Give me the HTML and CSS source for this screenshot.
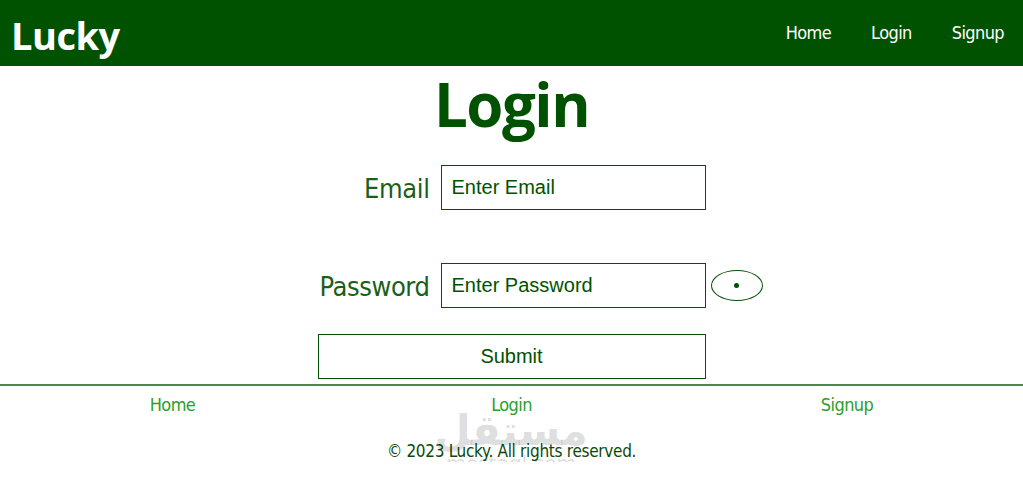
FILE: index.html
```html
<!DOCTYPE html>
<html lang="en">
<head>
<meta charset="utf-8">
<title>Lucky - Login</title>
<link rel="stylesheet" href="styles.css">
</head>
<body>
<header class="topbar">
  <a class="logo" href="#">Lucky</a>
  <nav class="topnav">
    <a href="#">Home</a>
    <a href="#">Login</a>
    <a href="#">Signup</a>
  </nav>
</header>
<main class="main">
  <h1 class="title">Login</h1>
  <form class="form">
    <div class="row row-email">
      <label class="label" for="email">Email</label>
      <input class="field" id="email" type="email" placeholder="Enter Email">
    </div>
    <div class="row row-pass">
      <label class="label" for="pass">Password</label>
      <div class="field-wrap">
        <input class="field" id="pass" type="password" placeholder="Enter Password">
        <button class="eye" type="button"><span class="dot"></span></button>
      </div>
    </div>
    <button class="submit" type="button">Submit</button>
  </form>
</main>
<footer class="footer">
  <nav class="footnav">
    <a href="#">Home</a>
    <a href="#">Login</a>
    <a href="#">Signup</a>
  </nav>
  <p class="copy">© 2023 Lucky. All rights reserved.</p>
  <div class="watermark"><span class="wm-ar">مستقل</span><span class="wm-en">mostaql.com</span></div>
</footer>
</body>
</html>
```
FILE: styles.css
```css
* { box-sizing: border-box; }
html, body { margin: 0; padding: 0; }
body {
  background: #fff;
  font-family: "Liberation Sans Narrow", "DejaVu Sans Condensed", "Roboto", sans-serif;
  color: #005200;
}
a { text-decoration: none; }

.topbar {
  height: 66px;
  background: #005200;
  display: flex;
  align-items: center;
  justify-content: space-between;
  padding: 0 19px 0 11px;
}
.logo {
  color: #fff;
  font-family: "Open Sans", sans-serif;
  font-weight: 700;
  font-size: 38px;
  letter-spacing: -0.5px;
  line-height: 1;
  margin-top: 3px;
}
.topnav { display: flex; gap: 40px; }
.topnav a {
  color: #fff;
  font-size: 18px;
  letter-spacing: -0.6px;
  line-height: 1;
  margin-top: -1px;
}

.main { display: flex; flex-direction: column; align-items: center; }
.title {
  margin: 3px 0 0;
  font-family: "Open Sans", sans-serif;
  font-weight: 700;
  font-size: 60px;
  line-height: 70px;
  letter-spacing: -1.5px;
  color: #005200;
}
.form {
  width: 388px;
  display: flex;
  flex-direction: column;
  margin-top: 26px;
}
.row {
  display: flex;
  justify-content: flex-end;
  align-items: center;
  gap: 11px;
}
.row-pass { margin-top: 53px; }
.label {
  font-size: 27px;
  letter-spacing: -0.4px;
  color: #1a5f1a;
  margin-top: 2px;
}
.field-wrap { position: relative; }
.field {
  display: block;
  width: 265px;
  height: 45px;
  border: 1px solid #005200;
  border-radius: 0;
  padding: 0 10px;
  font-family: "Liberation Sans", Arial, sans-serif;
  font-size: 20px;
  color: #005200;
  outline: none;
}
.field::placeholder { color: #005200; opacity: 1; }
.eye {
  position: absolute;
  left: 270px;
  top: 7px;
  width: 52px;
  height: 31px;
  border: 1px solid #005200;
  border-radius: 50%;
  background: #fff;
  padding: 0;
  display: flex;
  align-items: center;
  justify-content: center;
}
.dot {
  width: 5px;
  height: 5px;
  border-radius: 50%;
  background: #005200;
}
.submit {
  margin-top: 26px;
  width: 388px;
  height: 45px;
  border: 1px solid #005200;
  background: #fff;
  font-family: "Liberation Sans", Arial, sans-serif;
  font-size: 20px;
  color: #005200;
  padding: 0;
}

.footer {
  position: relative;
  margin-top: 5px;
  border-top: 2px solid #4a8a4a;
}
.footnav {
  display: grid;
  grid-template-columns: repeat(3, 1fr);
  padding: 9px 0 0;
}
.footnav a {
  text-align: center;
  color: #2aa02a;
  font-size: 18px;
  letter-spacing: -0.6px;
  line-height: 20px;
}
.footnav a:first-child { margin-left: 4px; }
.footnav a:last-child { margin-right: 11px; }
.copy {
  margin: 25px 0 0;
  text-align: center;
  font-size: 17px;
  letter-spacing: -0.3px;
  line-height: 22px;
  color: #0a4a0a;
}
.watermark {
  position: absolute;
  left: 449px;
  top: 22px;
  width: 124px;
  display: flex;
  flex-direction: column;
  align-items: center;
  color: rgba(0, 0, 0, 0.14);
  pointer-events: none;
  font-family: "DejaVu Sans", sans-serif;
}
.wm-ar { font-size: 42px; font-weight: 700; line-height: 46px; }
.wm-en { font-size: 21px; line-height: 20px; letter-spacing: -0.5px; }
```
